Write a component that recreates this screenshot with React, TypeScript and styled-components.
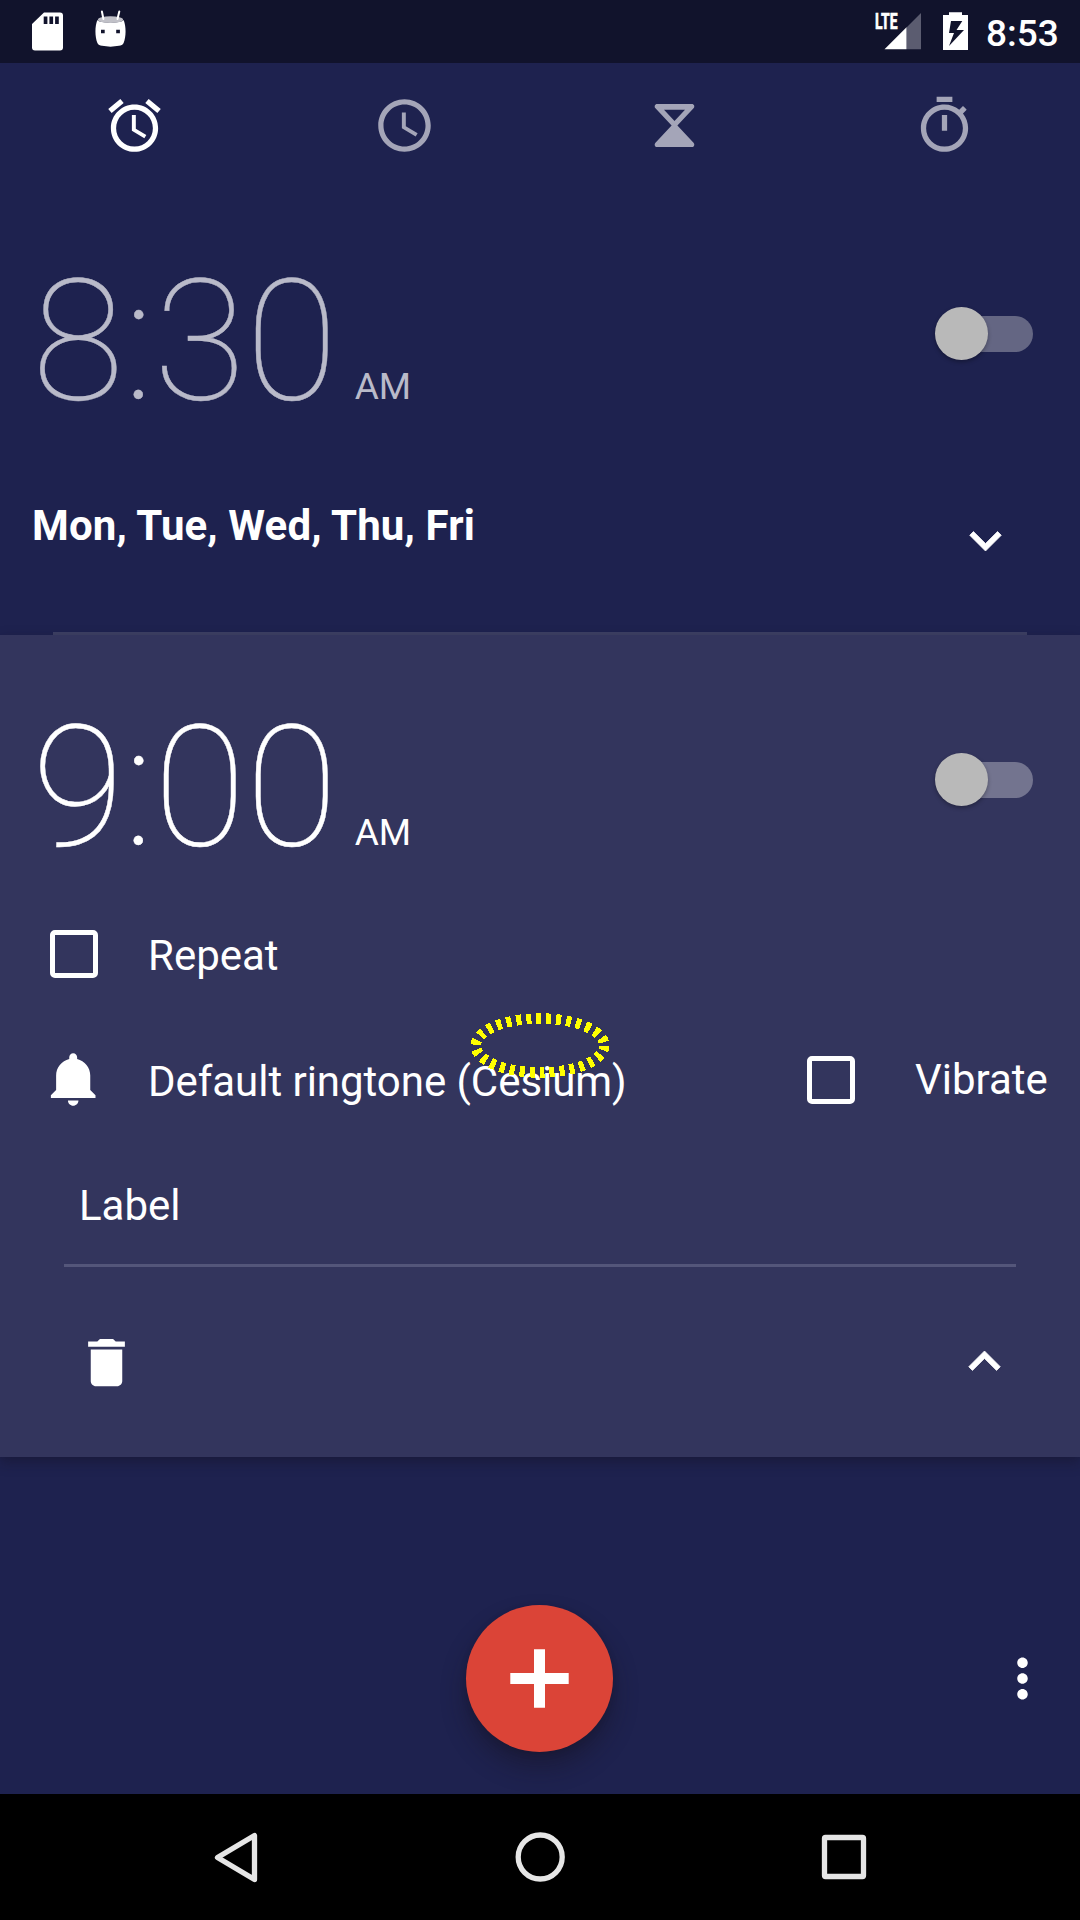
import React from "react";
import styled, { createGlobalStyle } from "styled-components";

const GlobalStyle = createGlobalStyle`
  * { box-sizing: border-box; }
  html, body { margin: 0; padding: 0; background: #000; }
`;

const Screen = styled.div`
  width: 1080px;
  height: 1920px;
  display: flex;
  flex-direction: column;
  overflow: hidden;
  background: #1e224f;
  color: #fff;
  font-family: Roboto, "Noto Sans", sans-serif;
  font-size: 42px;
  line-height: 50px;
`;

const StatusBar = styled.header`
  flex: none;
  height: 63px;
  display: flex;
  justify-content: space-between;
  background: #11132c;
`;

const StatusGroup = styled.div`
  display: flex;
  align-items: flex-start;
`;

const StatusGlyph = styled.svg<{ $gap?: number }>`
  display: block;
  flex: none;
  margin-left: ${(p) => p.$gap ?? 0}px;
`;

const Signal = styled.div`
  position: relative;
  width: 46px;
  height: 63px;
`;

const Network = styled.span`
  position: absolute;
  left: 0;
  top: 10px;
  font-size: 22.5px;
  line-height: 23px;
  font-weight: 800;
  -webkit-text-stroke: 0.5px #fff;
  transform: scaleX(0.62);
  transform-origin: 0 0;
`;

const Clock = styled.time`
  width: 94px;
  margin-left: 18px;
  font-size: 37px;
  font-weight: 500;
  line-height: 68px;
  white-space: nowrap;
`;

const Tabs = styled.nav`
  flex: none;
  height: 126px;
  display: grid;
  grid-template-columns: repeat(4, 1fr);
`;

const Tab = styled.button<{ $active?: boolean }>`
  display: flex;
  align-items: center;
  justify-content: center;
  padding: 0 2px 2px 0;
  border: 0;
  background: none;
  color: ${(p) => (p.$active ? "#fff" : "#a4a5b8")};
`;

const Icon = styled.svg`
  display: block;
  flex: none;
  width: 63px;
  height: 63px;
  fill: currentColor;
`;

const Card = styled.section<{ $expanded?: boolean }>`
  flex: none;
  display: flex;
  flex-direction: column;
  height: ${(p) => (p.$expanded ? 822 : 446)}px;
  padding-top: 69px;
  background: ${(p) => (p.$expanded ? "#33355d" : "transparent")};
  box-shadow: ${(p) => (p.$expanded ? "0 5px 12px rgba(20, 16, 30, 0.4)" : "none")};
`;

const TimeRow = styled.div`
  flex: none;
  height: 168px;
  padding: 0 47px 0 32px;
  display: flex;
  justify-content: space-between;
`;

const Time = styled.div<{ $dim?: boolean }>`
  display: flex;
  align-items: baseline;
  color: ${(p) => (p.$dim ? "#b9bac9" : "#fff")};
`;

const Digits = styled.span`
  font-size: 168px;
  line-height: 168px;
  font-weight: 100;
  -webkit-text-stroke: 0.4px currentColor;
`;

const Meridiem = styled.span`
  margin-left: 17px;
  font-size: 37px;
`;

const Switch = styled.button`
  display: flex;
  align-items: center;
  width: 98px;
  height: 53px;
  margin-top: 49px;
  padding: 0;
  border: 0;
  background: none;
`;

const Track = styled.span<{ $light?: boolean }>`
  width: 93px;
  height: 36px;
  margin-left: 5px;
  border-radius: 18px;
  display: flex;
  align-items: center;
  background: ${(p) => (p.$light ? "#73748f" : "#646683")};
`;

const Thumb = styled.span`
  flex: none;
  width: 53px;
  height: 53px;
  margin-left: -5px;
  border-radius: 50%;
  background: #b9b9b9;
  box-shadow: 0 2px 4px rgba(0, 0, 0, 0.3);
`;

const DaysRow = styled.div`
  flex: 1;
  display: flex;
  justify-content: space-between;
  align-items: flex-start;
  padding: 75px 63px 0 32px;
  font-weight: 700;
  letter-spacing: 0.12px;
`;

const Chevron = styled(Icon)`
  margin-top: 8px;
  stroke: currentColor;
  stroke-width: 0.3;
`;

const Divider = styled.div`
  flex: none;
  height: 3px;
  margin: 0 53px;
  background: #3d4064;
`;

const OptionRow = styled.div<{ $top: number }>`
  flex: none;
  height: 63px;
  margin-top: ${(p) => p.$top}px;
  padding-left: 42px;
  display: flex;
  align-items: center;
`;

const OptionText = styled.span<{ $drop?: number; $gap?: number; $track?: number }>`
  margin-left: ${(p) => p.$gap ?? 43}px;
  padding-top: ${(p) => p.$drop ?? 4}px;
  letter-spacing: ${(p) => p.$track ?? 0}px;
  white-space: nowrap;
`;

const VibrateOption = styled.div`
  width: 281px;
  margin-left: auto;
  display: flex;
  align-items: center;
`;

const CheckBox = styled.span`
  flex: none;
  width: 48px;
  height: 48px;
  margin: 0 7px 0 8px;
  border: 5.25px solid #fff;
  border-radius: 5px;
`;

const BellSlot = styled.span`
  width: 63px;
  padding-left: 1px;
`;

const RingtoneName = styled.span`
  position: relative;
`;

const Focus = styled.svg`
  position: absolute;
  left: -1px;
  top: -44px;
`;

const LabelField = styled.div`
  flex: none;
  height: 86px;
  margin: 70px 64px 0;
  padding: 0 15px;
  border-bottom: 3px solid #54567a;
`;

const CardActions = styled.div`
  flex: none;
  display: flex;
  justify-content: space-between;
  padding: 64px 64px 0 75px;
`;

const Collapse = styled(Chevron)`
  margin-top: -1px;
`;

const BottomBar = styled.footer`
  flex: 1;
  display: grid;
  grid-template-columns: 466px 147px 1fr;
  align-items: start;
  padding-top: 148px;
`;

const Fab = styled.button`
  grid-column: 2;
  width: 147px;
  height: 147px;
  padding: 0;
  border: 0;
  border-radius: 50%;
  display: flex;
  align-items: center;
  justify-content: center;
  background: #db4437;
  box-shadow: 0 15px 24px rgba(22, 18, 32, 0.45), 0 2px 6px rgba(22, 18, 32, 0.2);
`;

const Plus = styled.svg`
  display: block;
`;

const More = styled.div`
  height: 147px;
  padding-right: 26px;
  display: flex;
  align-items: center;
  justify-content: flex-end;
`;

const NavBar = styled.nav`
  flex: none;
  height: 126px;
  padding: 0 205px;
  display: flex;
  align-items: center;
  justify-content: space-between;
  background: #000;
`;

const NavGlyph = styled.svg`
  display: block;
  fill: none;
  stroke: #e6e6e6;
  stroke-width: 5.3;
  stroke-linejoin: round;
`;

const MaterialIcon = ({ d }: { d: string }) => (
  <Icon viewBox="0 0 24 24">
    <path d={d} />
  </Icon>
);

const paths = {
  alarm:
    "M22 5.72l-4.6-3.86-1.29 1.53 4.6 3.86L22 5.72zM7.88 3.39L6.6 1.86 2 5.71l1.29 1.53 4.59-3.85zM12.5 8H11v6l4.75 2.85.75-1.23-4-2.37V8zM12 4c-4.97 0-9 4.03-9 9s4.02 9 9 9c4.97 0 9-4.03 9-9s-4.03-9-9-9zm0 16c-3.87 0-7-3.13-7-7s3.13-7 7-7 7 3.13 7 7-3.13 7-7 7z",
  clock:
    "M11.99 2C6.47 2 2 6.48 2 12s4.47 10 9.99 10C17.52 22 22 17.52 22 12S17.52 2 11.99 2zM12 20c-4.42 0-8-3.58-8-8s3.58-8 8-8 8 3.58 8 8-3.58 8-8 8zm.5-13H11v6l5.25 3.15.75-1.23-4.5-2.67z",
  hourglass:
    "M5.4 3.8h13.2c.9 0 1.25 1 .65 1.65L13.1 12l6.15 6.55c.6.65.25 1.65-.65 1.65H5.4c-.9 0-1.25-1-.65-1.65L10.9 12 4.75 5.45C4.15 4.8 4.5 3.8 5.4 3.8zM8 6l4 4.25L16 6z",
  timer:
    "M15 1H9v2h6V1zm-4 13h2V8h-2v6zm8.03-6.61l1.42-1.42c-.43-.51-.9-.99-1.41-1.41l-1.42 1.42C16.07 4.74 14.12 4 12 4c-4.97 0-9 4.03-9 9s4.02 9 9 9 9-4.03 9-9c0-2.12-.74-4.07-1.97-5.61zM12 20c-3.87 0-7-3.13-7-7s3.13-7 7-7 7 3.13 7 7-3.13 7-7 7z",
  bell: "M11.5 22c1.1 0 2-.9 2-2h-4c0 1.1.9 2 2 2zm6.5-6v-5.5c0-3.07-2.13-5.64-5-6.32V3.5c0-.83-.67-1.5-1.5-1.5S10 2.67 10 3.5v.68c-2.87.68-5 3.25-5 6.32V16l-2 2v1h17v-1l-2-2z",
  trash:
    "M6 19c0 1.1.9 2 2 2h8c1.1 0 2-.9 2-2V7H6v12zM19 4h-3.5l-1-1h-5l-1 1H5v2h14V4z",
  more: "M12 8c1.1 0 2-.9 2-2s-.9-2-2-2-2 .9-2 2 .9 2 2 2zm0 2c-1.1 0-2 .9-2 2s.9 2 2 2 2-.9 2-2-.9-2-2-2zm0 6c-1.1 0-2 .9-2 2s.9 2 2 2 2-.9 2-2-.9-2-2-2z",
  less: "M12 8l-6 6 1.41 1.41L12 10.83l4.59 4.58L18 14z",
  expand: "M16.59 8.59L12 13.17 7.41 8.59 6 10l6 6 6-6z",
};

function AlarmTime({ time, dim }: { time: string; dim?: boolean }) {
  return (
    <TimeRow>
      <Time $dim={dim}>
        <Digits>{time}</Digits>
        <Meridiem>AM</Meridiem>
      </Time>
      <Switch aria-label="Alarm on">
        <Track $light={!dim}>
          <Thumb />
        </Track>
      </Switch>
    </TimeRow>
  );
}

export default function App() {
  return (
    <Screen>
      <GlobalStyle />
      <StatusBar>
        <StatusGroup>
          <StatusGlyph $gap={32} width="31" height="63" viewBox="0 0 31 63">
            <path
              fill="#fff"
              fillRule="evenodd"
              d="M12 12.5h16a3 3 0 0 1 3 3v32a3 3 0 0 1-3 3H3a3 3 0 0 1-3-3V24zM11.7 16.5v7.5h3.7v-7.5zM17.4 16.5v7.5h3.7v-7.5zM23.1 16.5v7.5h3.7v-7.5z"
            />
          </StatusGlyph>
          <StatusGlyph $gap={32} width="32" height="63" viewBox="0 0 32 63">
            <path
              fill="#fff"
              fillRule="evenodd"
              d="M2.3 20C5 23.6 26 23.6 28.7 20 31.2 27 31.2 36 28.6 43c-.8 2-2.6 2.4-4.6 2.8-5.5 1.1-11.5 1.1-17 0-2-.4-3.8-.8-4.6-2.8C-.2 36-.2 27 2.3 20zM6 29.7v3.6h3.7v-3.6zM21.2 29.7v3.6h3.7v-3.6z"
            />
            <ellipse cx="15.5" cy="19.7" rx="12.6" ry="3.4" fill="#c1c1c8" />
            <path d="M6.9 11.5l1.5 7.5M24.3 11.5l-1.8 7.5" stroke="#fff" strokeWidth="2" strokeLinecap="round" />
          </StatusGlyph>
        </StatusGroup>
        <StatusGroup>
          <Signal>
            <StatusGlyph width="46" height="63" viewBox="0 0 46 63">
              <path fill="#5b5c70" d="M31.5 27.5L46 13v36.3H31.5z" />
              <path fill="#fff" d="M9.5 49.3L31.5 27.3v22z" />
            </StatusGlyph>
            <Network>LTE</Network>
          </Signal>
          <StatusGlyph $gap={22} width="25" height="63" viewBox="0 0 25 63">
            <path
              fill="#fff"
              fillRule="evenodd"
              d="M6 12.3h13V15h6v35H0V15h6zM8 21L6 33h5L6 46l15-16h-7.5L19.3 21z"
            />
          </StatusGlyph>
          <Clock>8:53</Clock>
        </StatusGroup>
      </StatusBar>

      <Tabs>
        <Tab $active aria-label="Alarm">
          <MaterialIcon d={paths.alarm} />
        </Tab>
        <Tab aria-label="Clock">
          <MaterialIcon d={paths.clock} />
        </Tab>
        <Tab aria-label="Timer">
          <MaterialIcon d={paths.hourglass} />
        </Tab>
        <Tab aria-label="Stopwatch">
          <MaterialIcon d={paths.timer} />
        </Tab>
      </Tabs>

      <Card>
        <AlarmTime time="8:30" dim />
        <DaysRow>
          <span>Mon, Tue, Wed, Thu, Fri</span>
          <Chevron viewBox="0 0 24 24">
            <path d={paths.expand} />
          </Chevron>
        </DaysRow>
        <Divider />
      </Card>

      <Card $expanded>
        <AlarmTime time="9:00" />
        <OptionRow $top={50}>
          <CheckBox />
          <OptionText>Repeat</OptionText>
        </OptionRow>
        <OptionRow $top={63}>
          <BellSlot>
            <MaterialIcon d={paths.bell} />
          </BellSlot>
          <OptionText $track={-0.04}>
            Default ringtone (
            <RingtoneName>
              Cesium
              <Focus width="140" height="66" viewBox="0 0 140 66" shapeRendering="crispEdges">
                <ellipse
                  cx="70"
                  cy="32.5"
                  rx="64.3"
                  ry="27"
                  fill="none"
                  stroke="#ff0"
                  strokeWidth="10.5"
                  strokeDasharray="5 5"
                />
              </Focus>
            </RingtoneName>
            )
          </OptionText>
          <VibrateOption>
            <CheckBox />
            <OptionText $gap={53} $drop={0}>
              Vibrate
            </OptionText>
          </VibrateOption>
        </OptionRow>
        <LabelField>Label</LabelField>
        <CardActions>
          <MaterialIcon d={paths.trash} />
          <Collapse viewBox="0 0 24 24">
            <path d={paths.less} />
          </Collapse>
        </CardActions>
      </Card>

      <BottomBar>
        <Fab aria-label="Add alarm">
          <Plus width="59" height="59" viewBox="0 0 59 59">
            <path fill="#fff" d="M24 .3h11V24h23.7v11H35v23.7H24V35H.3V24H24z" />
          </Plus>
        </Fab>
        <More>
          <MaterialIcon d={paths.more} />
        </More>
      </BottomBar>

      <NavBar>
        <NavGlyph width="63" height="63" viewBox="0 0 63 63">
          <path d="M49.5 9.5v44L12.5 31.5z" />
        </NavGlyph>
        <NavGlyph width="63" height="63" viewBox="0 0 63 63">
          <circle cx="31.2" cy="31" r="22" />
        </NavGlyph>
        <NavGlyph width="63" height="63" viewBox="0 0 63 63">
          <rect x="12.5" y="11.5" width="39" height="39" rx="1" />
        </NavGlyph>
      </NavBar>
    </Screen>
  );
}
